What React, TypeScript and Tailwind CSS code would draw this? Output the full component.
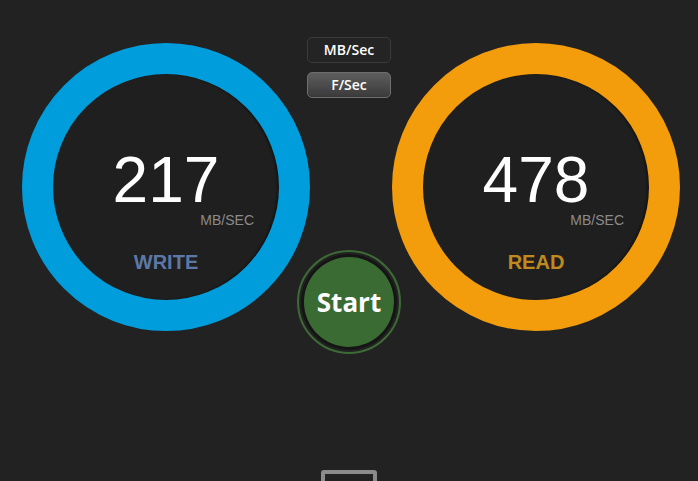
import React from "react";

interface GaugeProps {
    value: number;
    label: string;
    ringColor: string;
    labelColor: string;
}

function Gauge({ value, label, ringColor, labelColor }: GaugeProps) {
    return (
        <div
            className={`mt-[6px] w-[288px] h-[288px] shrink-0 rounded-full border-[31px] ${ringColor} bg-[#201f1f] shadow-[inset_-2px_0_2px_rgba(0,0,0,0.35)] flex flex-col items-center pt-[77px]`}
        >
            <div className="text-[64px] leading-[58px] text-white font-['Liberation_Sans',Arial,sans-serif]">
                {value}
            </div>
            <div className="mt-[4px] w-[176px] text-right text-[14px] leading-none text-[#8b8b8b] font-['Liberation_Sans',Arial,sans-serif]">
                MB/SEC
            </div>
            <div
                className={`mt-[25px] text-[20px] leading-none font-bold ${labelColor} font-['Liberation_Sans',Arial,sans-serif]`}
            >
                {label}
            </div>
        </div>
    );
}

export default function App() {
    return (
        <div className="w-full h-[481px] overflow-hidden bg-[#222222] flex flex-col font-['Open_Sans',sans-serif]">
            <div className="flex items-start pt-[37px] pl-[22px]">
                <Gauge value={217} label="WRITE" ringColor="border-[#009ddc]" labelColor="text-[#5c78a6]" />

                {/* middle controls */}
                <div className="w-[82px] shrink-0 flex flex-col items-center -ml-[2px] mr-[2px]">
                    <button className="w-[84px] h-[26px] rounded-[5px] border border-[#3b3b3b] bg-[#242424] text-white text-[14px] font-semibold leading-none">
                        MB/Sec
                    </button>
                    <button className="mt-[9px] w-[84px] h-[26px] rounded-[5px] border border-[#6e6e6e] bg-linear-to-b from-[#5e5e5e] to-[#3a3a3a] text-white text-[14px] font-semibold leading-none">
                        F/Sec
                    </button>
                    <div className="mt-[152px] w-[104px] h-[104px] shrink-0 rounded-full border-2 border-[#3d6b35] p-[2px]">
                        <div className="w-full h-full rounded-full bg-[#151515] p-[3px]">
                            <button className="w-full h-full rounded-full bg-[#3a6b33] text-white text-[26px] font-bold leading-none">
                                Start
                            </button>
                        </div>
                    </div>
                </div>

                <Gauge value={478} label="READ" ringColor="border-[#f39c0c]" labelColor="text-[#c08a1f]" />
            </div>

            <div className="flex justify-center mt-[116px]">
                <div className="w-[56px] h-[24px] rounded-t-[3px] border-4 border-[#8b8b8b]" />
            </div>
        </div>
    );
}
